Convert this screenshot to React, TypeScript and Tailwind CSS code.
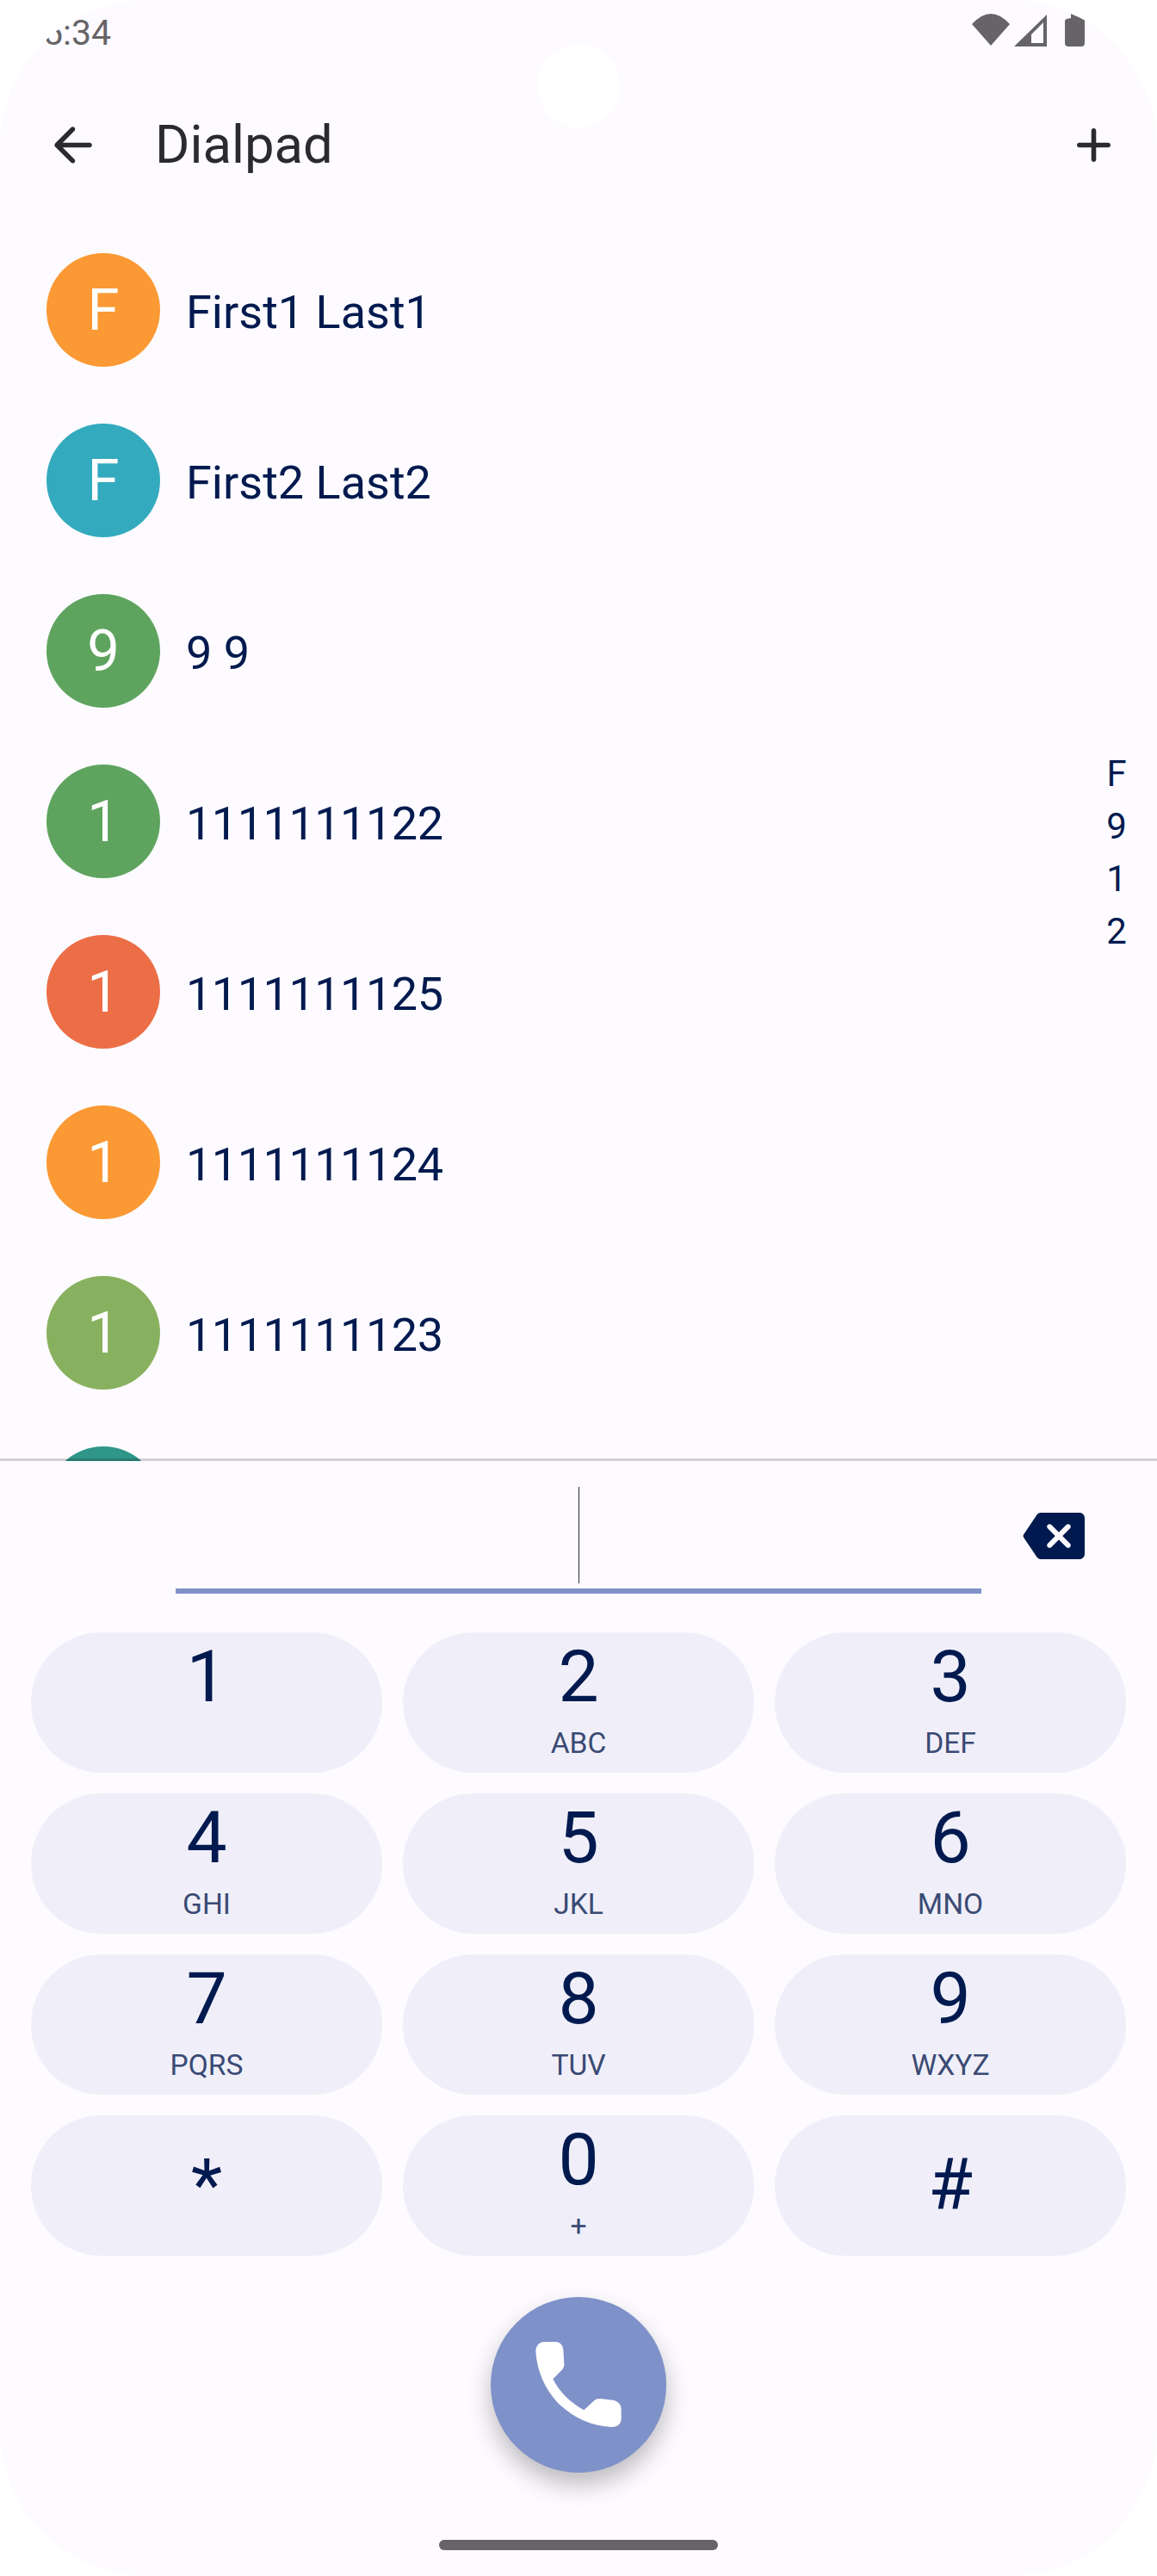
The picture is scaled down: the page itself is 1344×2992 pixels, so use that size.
const contacts = [
  { letter: "F", name: "First1 Last1", color: "bg-[#fb9934]", num: false },
  { letter: "F", name: "First2 Last2", color: "bg-[#33aabd]", num: false },
  { letter: "9", name: "9 9", color: "bg-[#5ea45f]", num: false },
  { letter: "1", name: "1111111122", color: "bg-[#5ea45f]", num: true },
  { letter: "1", name: "1111111125", color: "bg-[#ec6e47]", num: true },
  { letter: "1", name: "1111111124", color: "bg-[#fb9934]", num: true },
  { letter: "1", name: "1111111123", color: "bg-[#88b15f]", num: true },
  { letter: "", name: "", color: "bg-[#2f9688]", num: false },
];

const keys = [
  { d: "1", l: "" },
  { d: "2", l: "ABC" },
  { d: "3", l: "DEF" },
  { d: "4", l: "GHI" },
  { d: "5", l: "JKL" },
  { d: "6", l: "MNO" },
  { d: "7", l: "PQRS" },
  { d: "8", l: "TUV" },
  { d: "9", l: "WXYZ" },
  { d: "*", l: "", solo: true },
  { d: "0", l: "+" },
  { d: "#", l: "", solo: true },
];

export default function App() {
  return (
    <div className="w-[1344px] h-[2992px] bg-white font-['Roboto',sans-serif]">
      <div className="relative w-full h-full rounded-[170px] overflow-hidden bg-[#fdfbff] flex flex-col">
        {/* camera cutout */}
        <div className="absolute left-[624px] top-[52px] w-[96px] h-[96px] rounded-full bg-white" />

        {/* status bar */}
        <div className="h-[112px] shrink-0 flex items-start justify-between pl-[50px] pr-[84px] pt-[14px]">
          <span className="text-[41px] leading-[48px] text-[#666467]">5:34</span>
          <svg className="mt-[2px]" width="132" height="56" viewBox="0 0 132 56" fill="#666467">
            <path d="M1 12 Q23 -12 45 12 L23 37 Z" />
            <path fillRule="evenodd" d="M50 38 L88 1 V38 Z M70 34 H84 V10 L70 24 Z" />
            <path d="M109 8 Q109 7 111 6 L116 5 L116 0 L132 7 V34 a4 4 0 0 1 -4 4 H113 a4 4 0 0 1 -4 -4 Z" />
          </svg>
        </div>

        {/* app bar */}
        <div className="h-[112px] shrink-0 flex items-center pl-[51px] pr-[40px]">
          <svg width="67" height="67" viewBox="0 0 24 24" fill="#2b2b2e">
            <path d="M19 11H7.830l4.880-4.880c.39-.39.39-1.030 0-1.420-.39-.39-1.020-.39-1.410 0l-6.590 6.590c-.39.39-.39 1.020 0 1.410l6.590 6.590c.39.39 1.020.39 1.410 0 .39-.39.39-1.020 0-1.410L7.830 13H19c.55 0 1-.45 1-1s-.45-1-1-1z" />
          </svg>
          <span className="ml-[62px] text-[61.600px] leading-[72px] text-[#2b2b2e]">Dialpad</span>
          <svg className="ml-auto" width="67" height="67" viewBox="0 0 24 24" fill="#2b2b2e">
            <path d="M18 13h-5v5c0 .55-.45 1-1 1s-1-.45-1-1v-5H6c-.55 0-1-.45-1-1s.45-1 1-1h5V6c0-.55.45-1 1-1s1 .45 1 1v5h5c.55 0 1 .45 1 1s-.45 1-1 1z" />
          </svg>
        </div>

        {/* contacts */}
        <div className="relative flex-1 min-h-0 overflow-hidden pt-[37px]">
          {contacts.map((c, i) => (
            <div key={i} className="h-[198px] flex items-center pl-[54px]">
              <div className={`w-[132px] h-[132px] shrink-0 rounded-full flex items-center justify-center text-white text-[67px] leading-[67px] ${c.color}`}>
                {c.letter}
              </div>
              {c.name && (
                <span className={`ml-[30px] pt-[6px] text-[54px] leading-[64px] text-[#001a4f] ${c.num ? "tracking-[-0.5px]" : ""}`}>
                  {c.name}
                </span>
              )}
            </div>
          ))}
          <div className="absolute right-[35px] top-[644px] w-[24px] flex flex-col items-center text-[42px] leading-[61px] text-[#001a4f]">
            <span>F</span>
            <span>9</span>
            <span>1</span>
            <span>2</span>
          </div>
        </div>

        <div className="relative h-[3px] -mt-[3px] shrink-0 bg-black/[0.17]" />

        {/* number field */}
        <div className="flex shrink-0 items-start pl-[204px]">
          <div className="w-[936px] h-[154px] border-b-[6px] border-[#7f91c9] flex justify-center pt-[30px]">
            <div className="w-[1px] h-[112px] bg-[#2b2b2e]" />
          </div>
          <svg className="ml-[48px] mt-[51px]" width="72" height="72" viewBox="0 0 24 24" fill="#001a4f">
            <path d="M22 3H7c-.69 0-1.230.35-1.590.88L.37 11.450c-.22.34-.22.77 0 1.110l5.040 7.560c.36.52.9.88 1.590.88h15c1.100 0 2-.9 2-2V5c0-1.100-.9-2-2-2zm-3.700 13.300c-.39.39-1.020.39-1.410 0L14 13.410l-2.890 2.890c-.39.39-1.020.39-1.410 0-.39-.39-.39-1.020 0-1.410L12.590 12 9.700 9.110c-.39-.39-.39-1.020 0-1.410.39-.39 1.020-.39 1.410 0L14 10.590l2.890-2.890c.39-.39 1.020-.39 1.410 0 .39.39.39 1.020 0 1.410L15.410 12l2.890 2.890c.38.38.38 1.020 0 1.410z" />
          </svg>
        </div>

        {/* keypad */}
        <div className="grid grid-cols-3 gap-x-[24px] gap-y-[24px] px-[36px] mt-[45px] shrink-0">
          {keys.map((k) => (
            <div key={k.d} className={`h-[163px] rounded-full bg-[#f0eff9] flex flex-col items-center ${k.solo ? "pt-[39px]" : "pt-[10px]"}`}>
              <span className="text-[84px] leading-[84px] text-[#001a4f]">{k.d}</span>
              {k.l && <span className="mt-[18px] text-[33.600px] leading-[34px] text-[#3a4a74]">{k.l}</span>}
            </div>
          ))}
        </div>

        {/* call button */}
        <div className="mt-[48px] shrink-0 flex justify-center">
          <div className="w-[204px] h-[204px] rounded-full bg-[#7f91c9] shadow-[0_14px_28px_rgba(0,0,0,0.26)] flex items-center justify-center">
            <svg width="124" height="120" viewBox="0 0 372 360" fill="#ffffff">
              <path d="M37 62 C37 44 50 30 68 30 L105 30 C122 30 132 42 133 58 L136 108 C136 118 133 122 128 128 L97 160 C120 205 155 240 205 268 L238 237 C246 230 252 228 262 228 L305 233 C322 235 335 248 335 265 L335 298 C335 316 322 328 300 327 C150 318 45 200 37 62 Z" />
            </svg>
          </div>
        </div>

        {/* gesture bar */}
        <div className="mt-[78px] mb-[30px] shrink-0 self-center w-[324px] h-[12px] rounded-full bg-[#666467]" />
      </div>
    </div>
  );
}
